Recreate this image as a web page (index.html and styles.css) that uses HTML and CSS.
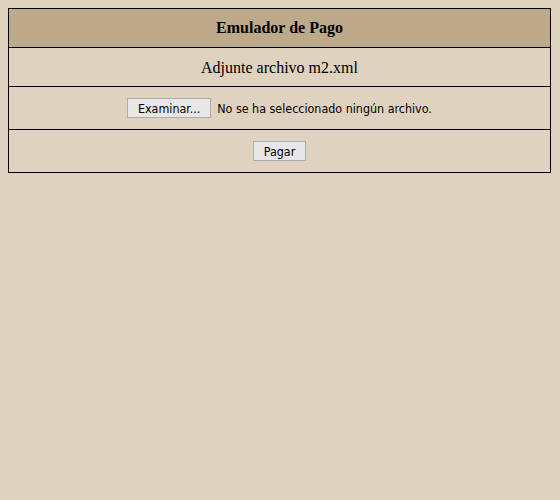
FILE: index.html
```html
<!DOCTYPE html>
<html lang="es">
<head>
<meta charset="utf-8">
<title>Emulador de Pago</title>
<link rel="stylesheet" href="styles.css">
</head>
<body>
<div class="panel">
  <div class="row head">Emulador de Pago</div>
  <div class="row label">Adjunte archivo m2.xml</div>
  <div class="row ctrl">
    <button class="btn btn-file" type="button">Examinar...</button>
    <span class="file-status">No se ha seleccionado ningún archivo.</span>
  </div>
  <div class="row ctrl last">
    <button class="btn btn-pay" type="button">Pagar</button>
  </div>
</div>
</body>
</html>
```
FILE: styles.css
```css
html, body {
  margin: 0;
  padding: 0;
  background: #dfd2be;
}
body {
  padding: 8px;
  font-family: "Liberation Serif", "Times New Roman", serif;
}
.panel {
  width: 541px;
  border: 1px solid #000;
  display: flex;
  flex-direction: column;
}
.row {
  display: flex;
  align-items: center;
  justify-content: center;
  border-bottom: 1px solid #000;
}
.row.last {
  border-bottom: none;
}
.head {
  height: 38px;
  background: #bcaa8b;
  font-weight: bold;
  font-size: 16px;
}
.label {
  height: 36px;
  padding-top: 2px;
  font-size: 16px;
}
.ctrl {
  height: 42px;
  gap: 6px;
  font-family: "DejaVu Sans Condensed", "DejaVu Sans", Tahoma, sans-serif;
  font-size: 12.4px;
}
.btn {
  font-family: "DejaVu Sans Condensed", "DejaVu Sans", Tahoma, sans-serif;
  font-size: 12.4px;
  color: #000;
  background: #e7e7e7;
  border: 1px solid #adadad;
  height: 20px;
  padding: 0;
  margin: 0;
}
.btn-file {
  width: 84px;
}
.btn-pay {
  width: 53px;
}
.file-status {
  color: #000;
}
```
